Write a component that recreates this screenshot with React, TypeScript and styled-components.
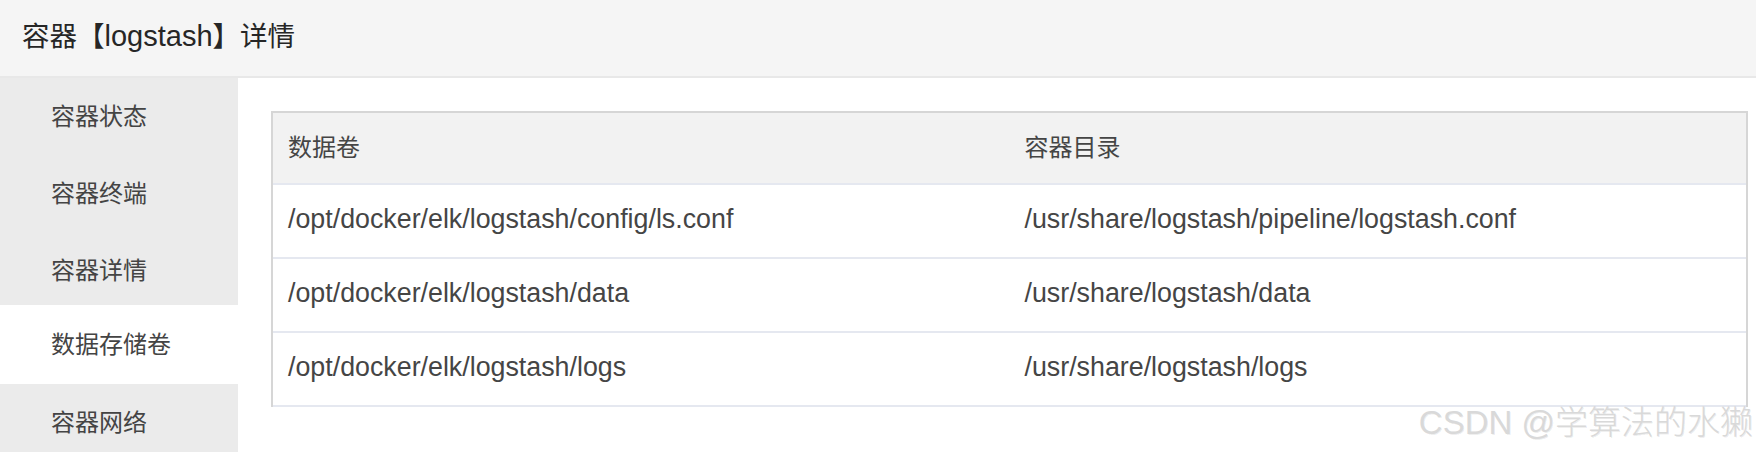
import React from "react";
import styled, { createGlobalStyle } from "styled-components";

const GlobalStyle = createGlobalStyle`
  html, body {
    margin: 0;
    padding: 0;
    background: #ffffff;
  }
  body {
    font-family: "Liberation Sans", "Noto Sans CJK SC", sans-serif;
    color: #444444;
  }
  * {
    box-sizing: border-box;
  }
`;

const Page = styled.div`
  position: relative;
  display: flex;
  flex-direction: column;
  height: 100vh;
  overflow: hidden;
`;

const Header = styled.header`
  flex: none;
  height: 78px;
  display: flex;
  align-items: center;
  padding: 0 0 4px 22px;
  background: #f5f5f5;
  border-bottom: 2px solid #e8e8e8;
`;

const Title = styled.h1`
  margin: 0;
  font-size: 27.5px;
  font-weight: normal;
  line-height: 1;
  color: #262626;
`;

const TitleName = styled.span`
  font-size: 29px;
`;

const Body = styled.div`
  flex: 1;
  display: flex;
  min-height: 0;
`;

const Sidebar = styled.nav`
  flex: none;
  width: 238px;
  display: flex;
  flex-direction: column;
  background: #ebebeb;
`;

/* the selected entry grows 4px upward over its neighbour */
const NavItem = styled.div<{ $active?: boolean }>`
  flex: none;
  height: ${(p) => (p.$active ? "79px" : "77px")};
  margin-top: ${(p) => (p.$active ? "-4px" : "0")};
  display: flex;
  align-items: center;
  padding: 1px 0 0 51px;
  font-size: 24px;
  line-height: 1;
  color: #444444;
  background: ${(p) => (p.$active ? "#ffffff" : "transparent")};
  cursor: pointer;
`;

const Content = styled.main`
  flex: 1;
  padding: 33px 8px 0 33px;
  background: #ffffff;
`;

const Table = styled.table`
  width: 100%;
  table-layout: fixed;
  border-collapse: separate;
  border-spacing: 0;
  border: 2px solid #d6d6d6;
  border-bottom: none;
`;

const HeadCell = styled.th`
  height: 72px;
  padding: 0 15px;
  text-align: left;
  font-weight: normal;
  font-size: 24px;
  line-height: 1;
  color: #454545;
  background: #f2f2f2;
  border-bottom: 2px solid #e5e8f0;
`;

const Cell = styled.td`
  height: 74px;
  padding: 0 15px 3px;
  font-size: 26.8px;
  line-height: 1;
  color: #454545;
  border-bottom: 2px solid #e5e8f0;
  white-space: nowrap;
`;

const Watermark = styled.div`
  position: absolute;
  right: 3px;
  bottom: 13px;
  font-family: "Liberation Sans", "Noto Sans CJK SC", sans-serif;
  font-size: 33px;
  font-weight: 300;
  line-height: 1;
  color: #d9d9d9;
  text-shadow: 1px 1px 0 rgba(0, 0, 0, 0.07);
  pointer-events: none;
  white-space: nowrap;
`;

const navItems = ["容器状态", "容器终端", "容器详情", "数据存储卷", "容器网络"];

const volumes = [
  { source: "/opt/docker/elk/logstash/config/ls.conf", target: "/usr/share/logstash/pipeline/logstash.conf" },
  { source: "/opt/docker/elk/logstash/data", target: "/usr/share/logstash/data" },
  { source: "/opt/docker/elk/logstash/logs", target: "/usr/share/logstash/logs" },
];

export default function App() {
  return (
    <>
      <GlobalStyle />
      <Page>
        <Header>
          <Title>
            容器【<TitleName>logstash</TitleName>】详情
          </Title>
        </Header>
        <Body>
          <Sidebar>
            {navItems.map((label) => (
              <NavItem key={label} $active={label === "数据存储卷"}>
                {label}
              </NavItem>
            ))}
          </Sidebar>
          <Content>
            <Table>
              <thead>
                <tr>
                  <HeadCell>数据卷</HeadCell>
                  <HeadCell>容器目录</HeadCell>
                </tr>
              </thead>
              <tbody>
                {volumes.map((v) => (
                  <tr key={v.source}>
                    <Cell>{v.source}</Cell>
                    <Cell>{v.target}</Cell>
                  </tr>
                ))}
              </tbody>
            </Table>
          </Content>
        </Body>
        <Watermark>CSDN @学算法的水獭</Watermark>
      </Page>
    </>
  );
}
